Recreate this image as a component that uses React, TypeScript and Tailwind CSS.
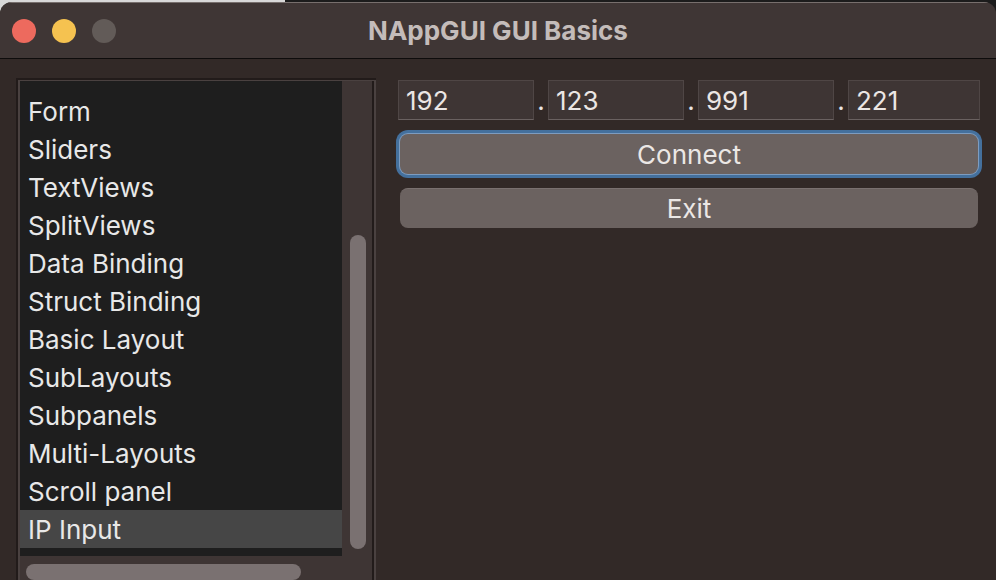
const items = [
  "Form",
  "Sliders",
  "TextViews",
  "SplitViews",
  "Data Binding",
  "Struct Binding",
  "Basic Layout",
  "SubLayouts",
  "Subpanels",
  "Multi-Layouts",
  "Scroll panel",
  "IP Input",
];

const selected = "IP Input";

const octets = ["192", "123", "991", "221"];

const TrafficLights = () => {
  return (
    <div className="flex items-center gap-x-4 pl-3">
      <span className="size-6 rounded-full bg-[#ed6a5e]" />
      <span className="size-6 rounded-full bg-[#f5c250]" />
      <span className="size-6 rounded-full bg-[#625b58]" />
    </div>
  );
};

const ListBox = () => {
  return (
    <div className="flex shrink-0 w-[360px] h-[530px] bg-[#4a4140] border-t-2 border-l-2 border-[#221b1a] pt-px pl-[2px] pr-[2px]">
      <div className="flex flex-col w-[322px]">
        <div className="h-[475px] overflow-hidden bg-[#1e1e1e] pt-[11px]">
          {items.map((item) => (
            <div
              key={item}
              className={
                item === selected
                  ? "h-[38px] flex items-center pl-[8px] bg-[#464646] text-[#e8e8e8] text-[26px]"
                  : "h-[38px] flex items-center pl-[8px] text-[#e8e8e8] text-[26px]"
              }
            >
              {item}
            </div>
          ))}
        </div>
        <div className="flex-1 bg-[#3e3534] pt-2 pl-[6px]">
          <div className="w-[275px] h-4 rounded-full bg-[#7a7171]" />
        </div>
      </div>
      <div className="w-[32px] bg-[#3e3534] border-r-2 border-[#221b1a] pt-[154px] pl-[8px]">
        <div className="w-4 h-[314px] rounded-full bg-[#7a7171]" />
      </div>
    </div>
  );
};

const IpInput = () => {
  return (
    <div className="flex px-[2px]">
      {octets.map((o, i) => [
        i > 0 && (
          <div
            key={"dot" + i}
            className="w-[14px] shrink-0 flex items-end justify-center pb-[6px] text-[26px] leading-none text-[#ebe6e4]"
          >
            .
          </div>
        ),
        <div
          key={o}
          className={
            i < 3
              ? "w-[136px] shrink-0 h-10 flex items-center pl-[7px] bg-[#3e3534] border border-[#4f4645] border-b-[#6a6160] text-[26px] text-[#ebe6e4]"
              : "flex-1 h-10 flex items-center pl-[7px] bg-[#3e3534] border border-[#4f4645] border-b-[#6a6160] text-[26px] text-[#ebe6e4]"
          }
        >
          {o}
        </div>,
      ])}
    </div>
  );
};

export default function App() {
  return (
    <div className="w-[996px] h-[580px] overflow-hidden bg-[linear-gradient(to_right,#d9d9d9_285px,#1c1c1c_285px)] font-['Inter',sans-serif]">
      <div className="mt-[2px] h-[578px] flex flex-col rounded-t-[12px] overflow-hidden bg-[#322927]">
        <div className="h-[57px] shrink-0 grid grid-cols-[1fr_auto_1fr] items-center bg-[#3f3635] border-t border-[#776f6d] border-b border-b-[#0e0c0c]">
          <TrafficLights />
          <div className="text-[26px] font-bold text-[#c4bcba]">NAppGUI GUI Basics</div>
          <div />
        </div>
        <div className="flex-1 min-h-0 flex pl-4 pt-[19px] bg-[#322927]">
          <ListBox />
          <div className="ml-5 w-[586px] flex flex-col pt-[2px]">
            <IpInput />
            <div className="mt-[14px] px-1">
              <button className="w-full h-10 rounded-[8px] bg-[#6b6260] text-[26px] text-[#ebe7e5] shadow-[0_0_0_1px_#7d9cc0,0_0_0_4px_#44709d]">
                Connect
              </button>
            </div>
            <div className="mt-[14px] px-1">
              <button className="w-full h-10 rounded-[8px] bg-[#6b6260] text-[26px] text-[#ebe7e5] border-t border-[#7a7170]">
                Exit
              </button>
            </div>
          </div>
        </div>
      </div>
    </div>
  );
}
